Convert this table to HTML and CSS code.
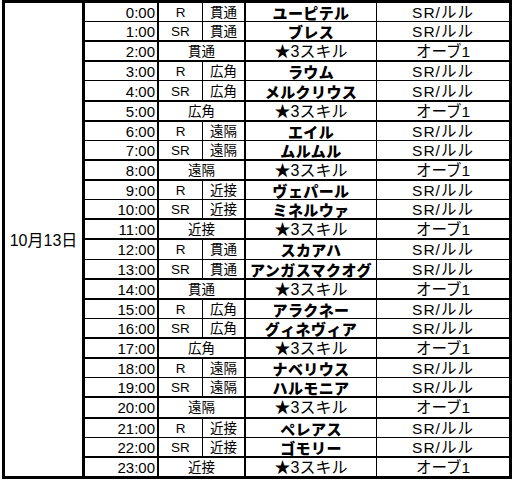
FILE: index.html
```html
<!DOCTYPE html>
<html lang="ja">
<head>
<meta charset="utf-8">
<link rel="stylesheet" href="styles.css">
</head>
<body>
<table class="sheet">
<colgroup>
<col class="c-date"><col class="c-time"><col class="c-rank"><col class="c-type"><col class="c-name"><col class="c-drop">
</colgroup>
<tbody>
<tr><td class="date" rowspan="24">10月13日</td><td class="time">0:00</td><td class="rank">R</td><td class="type">貫通</td><td class="name">ユーピテル</td><td class="drop sr">SR/ルル</td></tr>
<tr class="pre"><td class="time">1:00</td><td class="rank">SR</td><td class="type">貫通</td><td class="name">ブレス</td><td class="drop sr">SR/ルル</td></tr>
<tr class="orb"><td class="time">2:00</td><td class="type" colspan="2">貫通</td><td class="skill">★3スキル</td><td class="drop">オーブ1</td></tr>
<tr><td class="time">3:00</td><td class="rank">R</td><td class="type">広角</td><td class="name">ラウム</td><td class="drop sr">SR/ルル</td></tr>
<tr class="pre"><td class="time">4:00</td><td class="rank">SR</td><td class="type">広角</td><td class="name">メルクリウス</td><td class="drop sr">SR/ルル</td></tr>
<tr class="orb"><td class="time">5:00</td><td class="type" colspan="2">広角</td><td class="skill">★3スキル</td><td class="drop">オーブ1</td></tr>
<tr><td class="time">6:00</td><td class="rank">R</td><td class="type">遠隔</td><td class="name">エイル</td><td class="drop sr">SR/ルル</td></tr>
<tr class="pre"><td class="time">7:00</td><td class="rank">SR</td><td class="type">遠隔</td><td class="name">ムルムル</td><td class="drop sr">SR/ルル</td></tr>
<tr class="orb"><td class="time">8:00</td><td class="type" colspan="2">遠隔</td><td class="skill">★3スキル</td><td class="drop">オーブ1</td></tr>
<tr><td class="time">9:00</td><td class="rank">R</td><td class="type">近接</td><td class="name">ヴェパール</td><td class="drop sr">SR/ルル</td></tr>
<tr class="pre"><td class="time">10:00</td><td class="rank">SR</td><td class="type">近接</td><td class="name">ミネルウァ</td><td class="drop sr">SR/ルル</td></tr>
<tr class="orb"><td class="time">11:00</td><td class="type" colspan="2">近接</td><td class="skill">★3スキル</td><td class="drop">オーブ1</td></tr>
<tr><td class="time">12:00</td><td class="rank">R</td><td class="type">貫通</td><td class="name">スカアハ</td><td class="drop sr">SR/ルル</td></tr>
<tr class="pre"><td class="time">13:00</td><td class="rank">SR</td><td class="type">貫通</td><td class="name">アンガスマクオグ</td><td class="drop sr">SR/ルル</td></tr>
<tr class="orb"><td class="time">14:00</td><td class="type" colspan="2">貫通</td><td class="skill">★3スキル</td><td class="drop">オーブ1</td></tr>
<tr><td class="time">15:00</td><td class="rank">R</td><td class="type">広角</td><td class="name">アラクネー</td><td class="drop sr">SR/ルル</td></tr>
<tr class="pre"><td class="time">16:00</td><td class="rank">SR</td><td class="type">広角</td><td class="name">グィネヴィア</td><td class="drop sr">SR/ルル</td></tr>
<tr class="orb"><td class="time">17:00</td><td class="type" colspan="2">広角</td><td class="skill">★3スキル</td><td class="drop">オーブ1</td></tr>
<tr><td class="time">18:00</td><td class="rank">R</td><td class="type">遠隔</td><td class="name">ナベリウス</td><td class="drop sr">SR/ルル</td></tr>
<tr class="pre"><td class="time">19:00</td><td class="rank">SR</td><td class="type">遠隔</td><td class="name">ハルモニア</td><td class="drop sr">SR/ルル</td></tr>
<tr class="orb"><td class="time">20:00</td><td class="type" colspan="2">遠隔</td><td class="skill">★3スキル</td><td class="drop">オーブ1</td></tr>
<tr><td class="time">21:00</td><td class="rank">R</td><td class="type">近接</td><td class="name">ペレアス</td><td class="drop sr">SR/ルル</td></tr>
<tr class="pre"><td class="time">22:00</td><td class="rank">SR</td><td class="type">近接</td><td class="name">ゴモリー</td><td class="drop sr">SR/ルル</td></tr>
<tr class="orb last"><td class="time">23:00</td><td class="type" colspan="2">近接</td><td class="skill">★3スキル</td><td class="drop">オーブ1</td></tr>
</tbody>
</table>
</body>
</html>
```
FILE: styles.css
```css
html, body {
  margin: 0;
  padding: 0;
  background: #ffffff;
}
body {
  padding-left: 2px;
  font-family: "Liberation Sans", "Noto Sans CJK JP", sans-serif;
  color: #000000;
}
.sheet {
  border-collapse: separate;
  border-spacing: 0;
  table-layout: fixed;
  width: 510px;
  height: 479px;
  border: 3px solid #000000;
  box-sizing: border-box;
}
.c-date { width: 80px; }
.c-time { width: 74px; }
.c-rank { width: 44px; }
.c-type { width: 43px; }
.c-name { width: 131px; }
.c-drop { width: 132px; }
.sheet td {
  padding: 2px 0 0 0;
  height: 16px;
  line-height: 16px;
  border-bottom: 1px solid #000000;
  border-right: 1px solid #000000;
  text-align: center;
  vertical-align: middle;
  white-space: nowrap;
  overflow: visible;
  font-size: 13.5px;
  box-sizing: border-box;
}
.sheet tr.pre td,
.sheet tr.orb td { border-bottom-width: 2px; }
.sheet tr.last td { border-bottom: 0; }
.sheet td.date {
  border-right: 3px solid #000000;
  border-bottom: 0;
  font-size: 16px;
}
.sheet td.time {
  border-right: 2px solid #000000;
  text-align: right;
  padding-right: 2px;
  font-size: 15px;
}
.sheet td.type { border-right: 2px solid #000000; }
.sheet td.name {
  font-family: "Noto Sans CJK JP", sans-serif;
  font-weight: 900;
  font-size: 15px;
  letter-spacing: 0.4px;
}
.sheet td.skill {
  font-family: "Liberation Sans", "Noto Sans CJK JP", sans-serif;
  font-size: 16px;
}
.sheet td.drop {
  border-right: 0;
  font-size: 15.5px;
}
.sheet td.sr { letter-spacing: 1px; }
```
